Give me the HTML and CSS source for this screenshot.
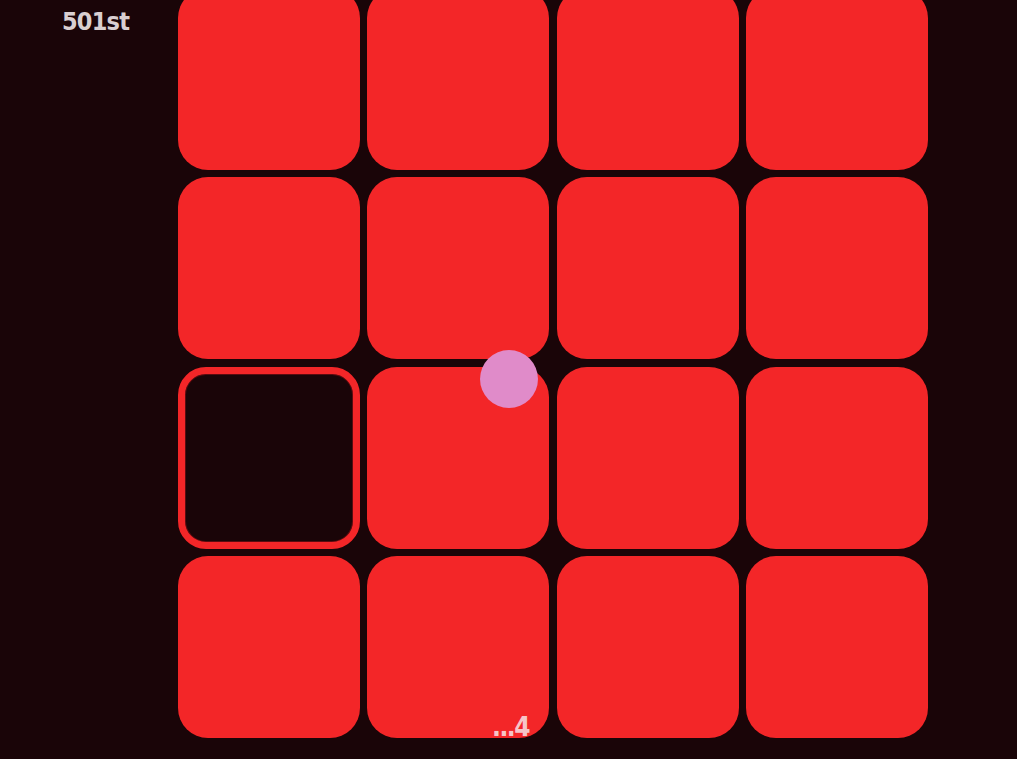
FILE: index.html
```html
<!DOCTYPE html>
<html lang="en">
<head>
  <meta charset="UTF-8" />
  <meta name="viewport" content="width=device-width, initial-scale=1.0"/>
  <title>Tiles</title>
  <link rel="stylesheet" href="styles.css">
</head>
<body>
  <main class="game">
    <aside class="side">
      <div class="score">501st</div>
    </aside>
    <section class="board">
      <div class="tile"></div>
      <div class="tile"></div>
      <div class="tile"></div>
      <div class="tile"></div>
      <div class="tile"></div>
      <div class="tile"></div>
      <div class="tile"></div>
      <div class="tile"></div>
      <div class="tile empty"></div>
      <div class="tile"></div>
      <div class="tile"></div>
      <div class="tile"></div>
      <div class="tile"></div>
      <div class="tile"></div>
      <div class="tile"></div>
      <div class="tile"></div>
      <div class="cursor"></div>
      <div class="level">...4</div>
    </section>
  </main>
</body>
</html>
```

FILE: styles.css
```css
html, body {
  margin: 0;
  padding: 0;
  height: 100%;
  overflow: hidden;
}
body {
  background-color: #1a0508;
  font-family: "DejaVu Sans Condensed", "DejaVu Sans", sans-serif;
}
.game {
  display: flex;
  height: 100vh;
}
.side {
  width: 178px;
  padding-left: 62px;
  box-sizing: border-box;
}
.score {
  color: #d9cfd1;
  font-weight: bold;
  font-size: 25px;
  line-height: 1;
  padding-top: 9px;
  letter-spacing: -0.8px;
}
.board {
  position: relative;
  width: 750px;
  height: 750px;
  margin-top: -12px;
  display: grid;
  grid-template-columns: repeat(4, 1fr);
  grid-template-rows: repeat(4, 1fr);
  gap: 7.5px;
}
.tile {
  background-color: #f32628;
  border-radius: 30px;
}
.tile.empty {
  background-color: #1a0508;
  border: 7px solid #f32628;
  box-shadow: inset 0 0 0 1px #5a0c10;
  border-radius: 28px;
}
.cursor {
  position: absolute;
  left: 302px;
  top: 362px;
  width: 58px;
  height: 58px;
  border-radius: 50%;
  background-color: #e08bc9;
}
.level {
  position: absolute;
  left: 314px;
  bottom: 1px;
  color: #f6c5c8;
  font-weight: bold;
  font-size: 26px;
  line-height: 20px;
  letter-spacing: -1.5px;
}
```
